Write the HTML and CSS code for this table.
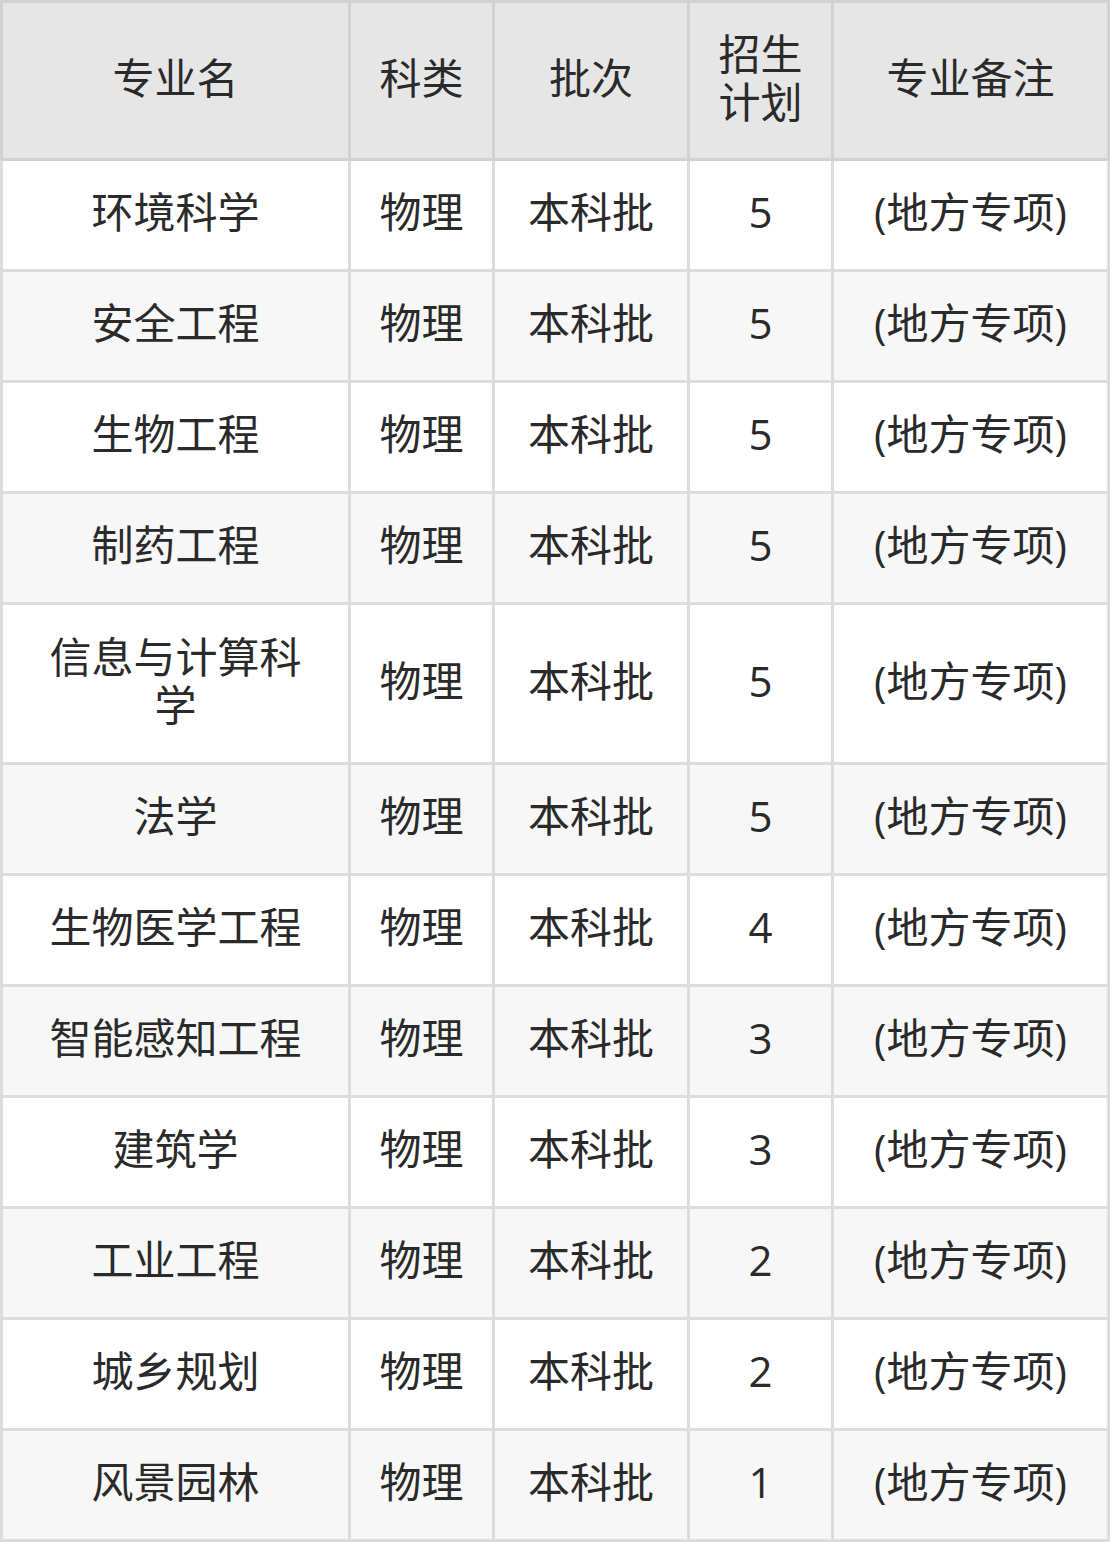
FILE: index.html
```html
<!DOCTYPE html>
<html lang="zh-CN">
<head>
<meta charset="utf-8">
<title>专业招生计划</title>
<link rel="stylesheet" href="styles.css">
</head>
<body>
<div class="table">
  <div class="thead">
    <div class="th">专业名</div>
    <div class="th">科类</div>
    <div class="th">批次</div>
    <div class="th">招生计划</div>
    <div class="th">专业备注</div>
  </div>
  <div class="tbody">
    <div class="td">环境科学</div><div class="td">物理</div><div class="td">本科批</div><div class="td">5</div><div class="td">(地方专项)</div>
    <div class="td alt">安全工程</div><div class="td alt">物理</div><div class="td alt">本科批</div><div class="td alt">5</div><div class="td alt">(地方专项)</div>
    <div class="td">生物工程</div><div class="td">物理</div><div class="td">本科批</div><div class="td">5</div><div class="td">(地方专项)</div>
    <div class="td alt">制药工程</div><div class="td alt">物理</div><div class="td alt">本科批</div><div class="td alt">5</div><div class="td alt">(地方专项)</div>
    <div class="td tall">信息与计算科学</div><div class="td tall">物理</div><div class="td tall">本科批</div><div class="td tall">5</div><div class="td tall">(地方专项)</div>
    <div class="td alt">法学</div><div class="td alt">物理</div><div class="td alt">本科批</div><div class="td alt">5</div><div class="td alt">(地方专项)</div>
    <div class="td">生物医学工程</div><div class="td">物理</div><div class="td">本科批</div><div class="td">4</div><div class="td">(地方专项)</div>
    <div class="td alt">智能感知工程</div><div class="td alt">物理</div><div class="td alt">本科批</div><div class="td alt">3</div><div class="td alt">(地方专项)</div>
    <div class="td">建筑学</div><div class="td">物理</div><div class="td">本科批</div><div class="td">3</div><div class="td">(地方专项)</div>
    <div class="td alt">工业工程</div><div class="td alt">物理</div><div class="td alt">本科批</div><div class="td alt">2</div><div class="td alt">(地方专项)</div>
    <div class="td">城乡规划</div><div class="td">物理</div><div class="td">本科批</div><div class="td">2</div><div class="td">(地方专项)</div>
    <div class="td alt">风景园林</div><div class="td alt">物理</div><div class="td alt">本科批</div><div class="td alt">1</div><div class="td alt">(地方专项)</div>
  </div>
</div>
</body>
</html>
```
FILE: styles.css
```css
html, body {
  margin: 0;
  padding: 0;
  background: #ffffff;
}
.table {
  width: 1110px;
  font-family: "Open Sans", "Noto Sans CJK SC", sans-serif;
  font-size: 42px;
  line-height: 48px;
  color: #2a2a2a;
}
.thead, .tbody {
  display: grid;
  grid-template-columns: 345px 141px 192px 141px 273px;
  column-gap: 3px;
  row-gap: 3px;
}
.thead {
  background: #d2d2d2;
  padding: 3px 3px 3px 3px;
}
.tbody {
  background: #dcdcdc;
  padding: 0 3px 3px 3px;
}
.th, .td {
  display: flex;
  align-items: center;
  justify-content: center;
  text-align: center;
  padding: 0 27px 6px;
  box-sizing: border-box;
}
.th {
  background: #e6e6e6;
  height: 155px;
}
.td {
  background: #ffffff;
  height: 108px;
}
.td.alt {
  background: #f7f7f7;
}
.td.tall {
  height: 157px;
}
```
